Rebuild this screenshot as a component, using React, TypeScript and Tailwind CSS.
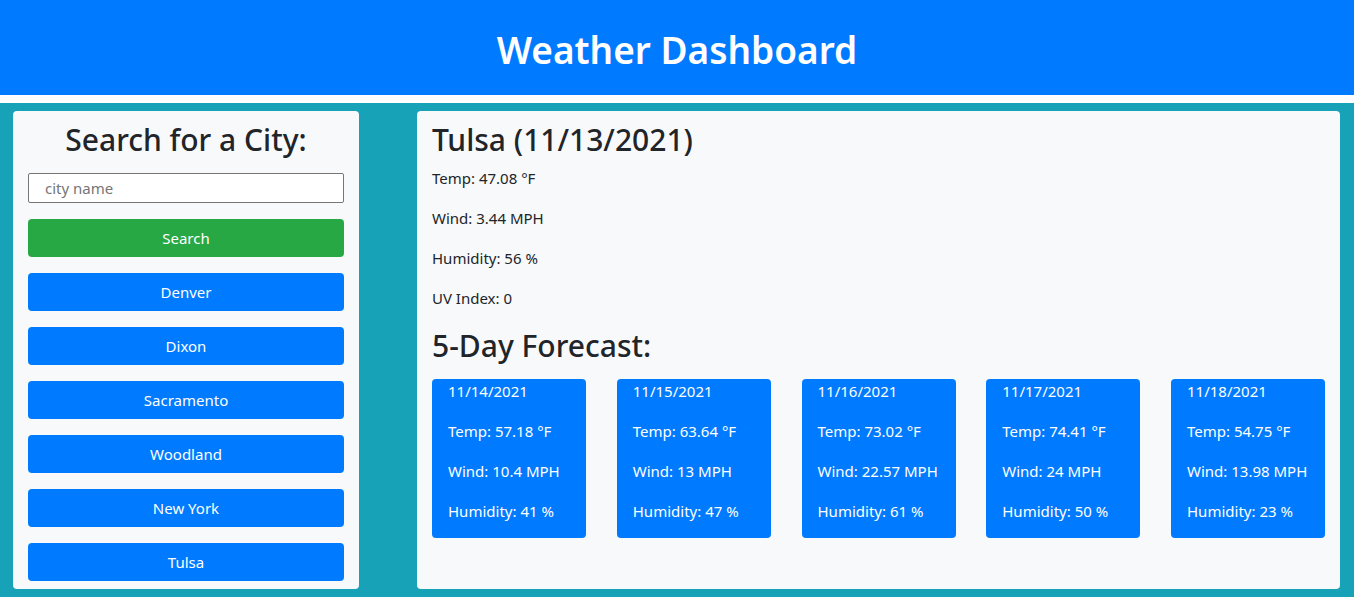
const CITIES = ["Denver", "Dixon", "Sacramento", "Woodland", "New York", "Tulsa"]

const FORECAST = [
  { date: "11/14/2021", temp: "57.18", wind: "10.4", humidity: "41" },
  { date: "11/15/2021", temp: "63.64", wind: "13", humidity: "47" },
  { date: "11/16/2021", temp: "73.02", wind: "22.57", humidity: "61" },
  { date: "11/17/2021", temp: "74.41", wind: "24", humidity: "50" },
  { date: "11/18/2021", temp: "54.75", wind: "13.98", humidity: "23" },
]

export default function App() {
  return (
    <div className="min-h-screen bg-[#17a2b8] font-['Noto_Sans',sans-serif] text-[#212529]">
      {/* Header */}
      <header className="h-[95px] bg-[#007bff] border-b-8 border-white box-content flex items-start justify-center">
        <h1 className="mt-[27px] text-[37px] leading-[46px] font-semibold text-white">Weather Dashboard</h1>
      </header>

      <div className="flex gap-[58px] px-[13px] pt-[8px] pb-[8px]">
        {/* Search sidebar */}
        <aside className="w-[346px] shrink-0 rounded bg-[#f8f9fa] px-[15px] pb-[8px]">
          <h2 className="mt-[10px] mb-[14px] text-center text-[30px] leading-[38px] font-medium">Search for a City:</h2>
          <input
            type="text"
            placeholder="city name"
            className="block w-full h-[30px] border border-[#767676] rounded-[2px] bg-white px-[16px] text-[15px] placeholder:text-[#757575] outline-none"
          />
          <button className="mt-[16px] block w-full h-[38px] rounded bg-[#28a745] text-[15px] text-white">Search</button>
          {CITIES.map((city) => (
            <button key={city} className="mt-[16px] block w-full h-[38px] rounded bg-[#007bff] text-[15px] text-white">
              {city}
            </button>
          ))}
        </aside>

        {/* Current + forecast */}
        <main className="w-[923px] shrink-0 rounded bg-[#f8f9fa] px-[15px] pt-[10px]">
          <h2 className="text-[30px] leading-[38px] font-medium">Tulsa (11/13/2021)</h2>
          <div className="text-[15px] leading-[24px]">
            <p className="mt-[7px]">Temp: 47.08 °F</p>
            <p className="mt-[16px]">Wind: 3.44 MPH</p>
            <p className="mt-[16px]">Humidity: 56 %</p>
            <p className="mt-[16px]">UV Index: 0</p>
          </div>
          <h2 className="mt-[17px] text-[30px] leading-[38px] font-medium">5-Day Forecast:</h2>
          <div className="mt-[14px] flex justify-between">
            {FORECAST.map((day) => (
              <div key={day.date} className="w-[154px] h-[159px] rounded bg-[#007bff] px-[16px] text-[15px] leading-[24px] text-white">
                <p>{day.date}</p>
                <p className="mt-[16px]">Temp: {day.temp} °F</p>
                <p className="mt-[16px]">Wind: {day.wind} MPH</p>
                <p className="mt-[16px]">Humidity: {day.humidity} %</p>
              </div>
            ))}
          </div>
        </main>
      </div>
    </div>
  )
}
